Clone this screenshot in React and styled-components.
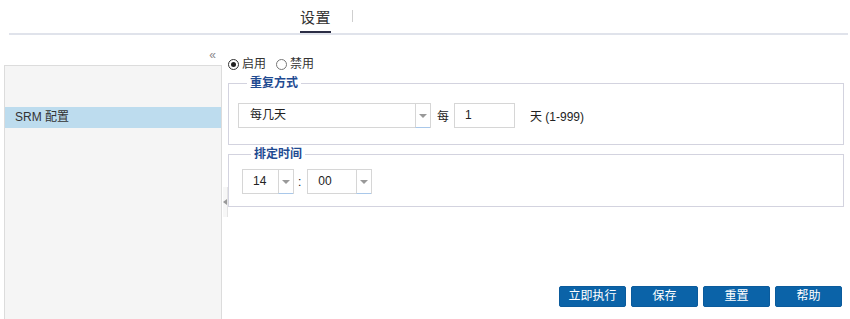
import styled, { createGlobalStyle } from 'styled-components';

const GlobalStyle = createGlobalStyle`
    body {
        margin: 0;
        background: #fff;
        font-family: "Liberation Sans", Arial, "Noto Sans CJK SC", sans-serif;
        font-size: 12px;
        color: #333;
        overflow: hidden;
    }
`;

const Page = styled.div`
    width: 850px;
    height: 319px;
    overflow: hidden;
`;

const Header = styled.div`
    margin: 0 2px 0 9px;
    height: 33px;
    border-bottom: 2px solid #e0e3eb;
    display: flex;
    align-items: flex-end;
    padding-left: 291px;
`;

const Tab = styled.div`
    height: 24px;
    line-height: 18px;
    font-size: 15px;
    color: #333;
    letter-spacing: 0.5px;
    border-bottom: 2px solid ${(p) => (p.active ? '#2b2d45' : 'transparent')};
    box-sizing: border-box;
`;

const TabSep = styled.div`
    width: 1px;
    height: 12px;
    background: #cfcfcf;
    margin: 0 0 11px 21px;
    align-self: flex-end;
`;

const Body = styled.div`
    display: flex;
    padding-left: 4px;
`;

const SideColumn = styled.div`
    width: 218px;
    display: flex;
    flex-direction: column;
`;

const Collapse = styled.div`
    height: 30px;
    display: flex;
    justify-content: flex-end;
    align-items: flex-start;
    padding: 14px 6px 0 0;
    box-sizing: border-box;
    color: #888;
    font-size: 12px;
    line-height: 12px;
`;

const SidePanel = styled.div`
    height: 260px;
    background: #f5f5f5;
    border: 1px solid #dcdcdc;
    padding-top: 41px;
`;

const SideItem = styled.div`
    height: 21px;
    line-height: 21px;
    padding-left: 10px;
    background: ${(p) => (p.selected ? '#bddcee' : 'transparent')};
    color: #333;
`;

const Splitter = styled.div`
    width: 6px;
    padding-top: 152px;
    box-sizing: border-box;
`;

const Handle = styled.div`
    width: 4px;
    height: 30px;
    margin-left: 1px;
    background: #f7f7f7;
    border-right: 1px solid #e4e4e4;
    display: flex;
    align-items: center;
    justify-content: flex-start;
    svg {
        display: block;
    }
`;

const Main = styled.div`
    width: 616px;
    display: flex;
    flex-direction: column;
`;

const RadioRow = styled.div`
    display: flex;
    align-items: center;
    height: 14px;
    margin-top: 22px;
`;

const RadioLabel = styled.label`
    display: flex;
    align-items: center;
    margin-right: 10px;
    line-height: 14px;
`;

const RadioCircle = styled.span`
    width: 9px;
    height: 9px;
    border: 1px solid ${(p) => (p.checked ? '#333' : '#777')};
    border-radius: 50%;
    margin-right: 3px;
    display: flex;
    align-items: center;
    justify-content: center;
    background: #fff;
    &::after {
        content: '';
        width: 5px;
        height: 5px;
        border-radius: 50%;
        background: ${(p) => (p.checked ? '#222' : 'transparent')};
    }
`;

const Fieldset = styled.fieldset`
    margin: ${(p) => p.top}px 0 0 0;
    padding: ${(p) => p.pad};
    border: 1px solid #d3d3df;
    min-width: 0;
`;

const Legend = styled.legend`
    padding: 0 3px;
    margin-left: 9px;
    line-height: 14px;
    font-size: 12px;
    font-weight: bold;
    color: #1f4b92;
`;

const Row = styled.div`
    display: flex;
    align-items: center;
`;

const Select = styled.div`
    width: ${(p) => p.width}px;
    height: 25px;
    border: 1px solid #d6d6d6;
    box-sizing: border-box;
    display: flex;
    background: #fff;
`;

const SelectValue = styled.div`
    flex: 1;
    line-height: 23px;
    padding-left: ${(p) => p.indent}px;
    color: #222;
`;

const SelectArrow = styled.div`
    width: 14px;
    border-left: 1px solid #d6d6d6;
    border-bottom: 1px solid #a9c8ea;
    margin-bottom: -1px;
    display: flex;
    align-items: center;
    justify-content: center;
    &::after {
        content: '';
        border-left: 4px solid transparent;
        border-right: 4px solid transparent;
        border-top: 4px solid #999;
    }
`;

const Word = styled.span`
    margin: ${(p) => p.m};
    color: #222;
`;

const TextInput = styled.div`
    width: 61px;
    height: 25px;
    border: 1px solid #d6d6d6;
    box-sizing: border-box;
    line-height: 23px;
    padding-left: 10px;
    color: #222;
`;

const ButtonBar = styled.div`
    display: flex;
    justify-content: flex-end;
    gap: 5px;
    margin: 79px 2px 0 0;
`;

const Button = styled.button`
    width: 67px;
    height: 21px;
    padding: 0;
    border: 1px solid #0b5b9c;
    border-radius: 2px;
    background: #0b63a8;
    color: #fff;
    font-family: inherit;
    font-size: 12px;
    line-height: 19px;
    cursor: pointer;
`;

const SelectBox = ({ width, value, indent }) => (
    <Select width={width}>
        <SelectValue indent={indent}>{value}</SelectValue>
        <SelectArrow />
    </Select>
);

export default function App() {
    return (
        <Page>
            <GlobalStyle />
            <Header>
                <Tab active>设置</Tab>
                <TabSep />
            </Header>
            <Body>
                <SideColumn>
                    <Collapse>«</Collapse>
                    <SidePanel>
                        <SideItem selected>SRM 配置</SideItem>
                    </SidePanel>
                </SideColumn>
                <Splitter>
                    <Handle>
                        <svg width="4" height="6" viewBox="0 0 4 6">
                            <path d="M4 0 L0 3 L4 6 Z" fill="#999" />
                        </svg>
                    </Handle>
                </Splitter>
                <Main>
                    <RadioRow>
                        <RadioLabel>
                            <RadioCircle checked />
                            启用
                        </RadioLabel>
                        <RadioLabel>
                            <RadioCircle />
                            禁用
                        </RadioLabel>
                    </RadioRow>
                    <Fieldset top={5} pad="13px 9px 16px 9px">
                        <Legend>重复方式</Legend>
                        <Row>
                            <SelectBox width={193} value="每几天" indent={11} />
                            <Word m="0 5px 0 6px">每</Word>
                            <TextInput>1</TextInput>
                            <Word m="0 0 0 15px">天 (1-999)</Word>
                        </Row>
                    </Fieldset>
                    <Fieldset top={2} pad="8px 9px 12px 13px">
                        <Legend>排定时间</Legend>
                        <Row>
                            <SelectBox width={52} value="14" indent={10} />
                            <Word m="0 6px 0 4px">:</Word>
                            <SelectBox width={65} value="00" indent={10} />
                        </Row>
                    </Fieldset>
                    <ButtonBar>
                        <Button>立即执行</Button>
                        <Button>保存</Button>
                        <Button>重置</Button>
                        <Button>帮助</Button>
                    </ButtonBar>
                </Main>
            </Body>
        </Page>
    );
}
